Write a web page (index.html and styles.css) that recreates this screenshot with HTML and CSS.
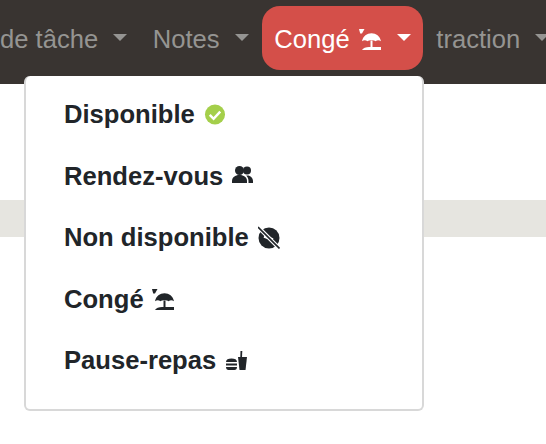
FILE: index.html
```html
<!DOCTYPE html>
<html lang="fr">
  <head>
    <meta charset="UTF-8" />
    <title>Congé</title>
    <link rel="stylesheet" href="styles.css">
  </head>
  <body>
    <svg class="defs" width="0" height="0">
      <symbol id="beach" viewBox="0 0 22 21">
        <path d="M0 0h5.500L3 4.500H1.200z" />
        <path d="M3 12.200C4 7 8 4.200 12.500 4.200s8.500 2.800 9.500 8C20 10.800 18.500 10.800 16.500 12.200 14.800 10.800 10.200 10.800 8.500 12.200 6.500 10.800 5 10.800 3 12.200z" />
        <path d="M11.500 11.500h2V18h-2z" />
        <path d="M3 21c1-2 4-3 7-3h12v3z" />
      </symbol>
    </svg>

    <nav class="navbar">
      <a class="nav-link dropdown-toggle">de tâche</a>
      <a class="nav-link dropdown-toggle">Notes</a>
      <a class="nav-link dropdown-toggle active">
        Congé
        <svg class="icon icon-nav"><use href="#beach" /></svg>
      </a>
      <a class="nav-link dropdown-toggle">traction</a>

      <div class="dropdown-menu">
        <a class="dropdown-item">
          Disponible
          <svg class="icon" viewBox="0 0 22 22">
            <circle cx="11" cy="11" r="10.500" fill="#a4cf4a" />
            <path d="M5.500 11.500l4 4 7-7.500" fill="none" stroke="#fff" stroke-width="2.600" />
          </svg>
        </a>
        <a class="dropdown-item">
          Rendez-vous
          <svg class="icon icon-users" viewBox="0 0 21 17">
            <circle cx="7.500" cy="4.500" r="4.500" />
            <circle cx="15" cy="4.500" r="4" />
            <path d="M0 17v-2c0-3.500 3-6 7.500-6s7.500 2.500 7.500 6v2z" />
            <path d="M16.500 17v-2c0-2.200-.8-4-2.300-5.500C18 8.800 21 11.500 21 15v2z" />
          </svg>
        </a>
        <a class="dropdown-item">
          Non disponible
          <svg class="icon icon-off" viewBox="0 0 22 23">
            <circle cx="11" cy="12" r="10.500" />
            <path d="M6 10.500l9 3" fill="none" stroke="#fff" stroke-width="2.500" />
            <path d="M0 1L21.500 22.500" stroke="#fff" stroke-width="4" />
            <path d="M0 1L21.500 22.500" stroke="#212529" stroke-width="1.600" />
          </svg>
        </a>
        <a class="dropdown-item">
          Congé
          <svg class="icon icon-beach"><use href="#beach" /></svg>
        </a>
        <a class="dropdown-item">
          Pause-repas
          <svg class="icon icon-meal" viewBox="0 0 22 19">
            <path d="M1 11c0-2.500 2.200-3.500 5.500-3.500S12 8.500 12 11z" />
            <path d="M1 12.500h11v2H1z" />
            <path d="M1 16h11c0 2-1 3-2.500 3h-6C2 19 1 18 1 16z" />
            <path d="M13 6h9l-1.500 13h-6z" />
            <path d="M15.300 6l.2-6h1.800l-.3 6z" />
          </svg>
        </a>
      </div>
    </nav>

    <div class="stripe"></div>
  </body>
</html>
```

FILE: styles.css
```css
* {
  box-sizing: border-box;
}

html,
body {
  height: 100%;
  overflow: hidden;
}

body {
  margin: 0;
  background: #fff;
  font-family: "Liberation Sans", Arial, sans-serif;
  font-size: 25.6px;
}

.defs {
  position: absolute;
}

.navbar {
  position: relative;
  display: flex;
  align-items: flex-start;
  height: 84px;
  padding-top: 6px;
  margin-left: -12.8px;
  background: #393431;
  white-space: nowrap;
}

.nav-link {
  flex-shrink: 0;
  display: flex;
  align-items: center;
  height: 64px;
  padding: 2px 12.8px 0;
  color: #959492;
  border-radius: 18px;
}

.nav-link.active {
  margin-left: 1px;
  padding-left: 11.8px;
  background: #d44f49;
  color: #fff;
}

.dropdown-toggle::after {
  content: "";
  margin-left: 15px;
  margin-top: -3px;
  border-top: 7px solid currentColor;
  border-left: 7.6px solid transparent;
  border-right: 7.6px solid transparent;
}

.nav-link.active .icon-nav {
  margin-left: 9px;
  margin-right: 1px;
  margin-top: 1px;
}

.dropdown-menu {
  position: absolute;
  top: 76px;
  left: 36.8px;
  width: 400px;
  height: 335px;
  padding: 8.200px 0 16px;
  background: #fff;
  border: 2px solid #d8d8d8;
  border-top: 0;
  border-radius: 6px;
}

.dropdown-item {
  display: flex;
  align-items: center;
  gap: 9px;
  height: 61.500px;
  padding-left: 38px;
  color: #212529;
  font-weight: 700;
}

.icon {
  width: 22px;
  height: 21px;
  flex-shrink: 0;
  fill: currentColor;
}

.icon-users {
  width: 21px;
  height: 17px;
  margin-top: -3px;
}

.icon-off {
  height: 23px;
}

.icon-beach {
  margin-left: -1px;
}

.icon-meal {
  height: 19px;
}

.stripe {
  height: 37px;
  margin-top: 116px;
  background: #e6e5e0;
}
```
